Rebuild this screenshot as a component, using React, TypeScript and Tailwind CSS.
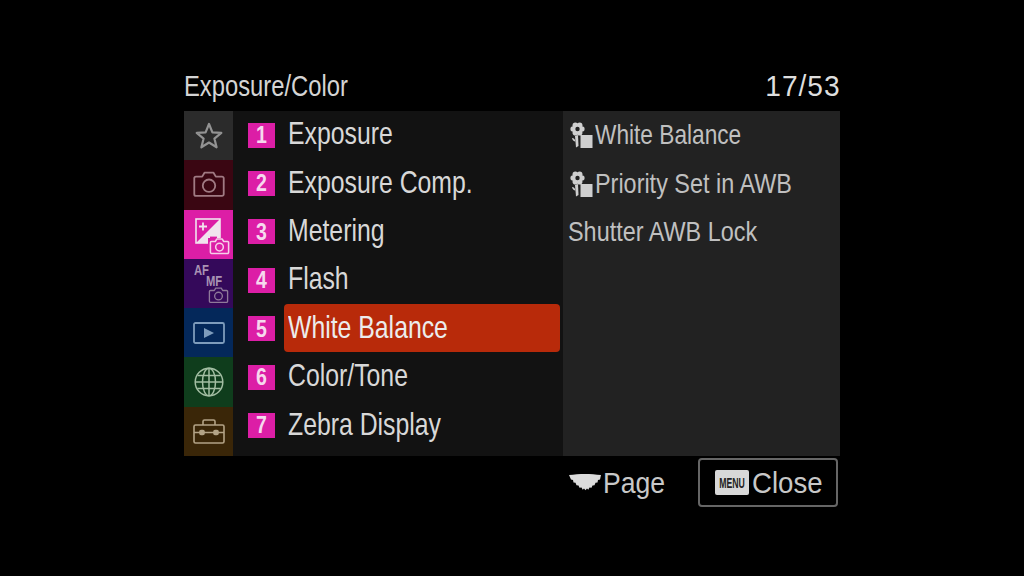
const F = "font-['Liberation_Sans',sans-serif]";

const Star = () => (
  <svg width="30" height="30" viewBox="0 0 30 30" fill="none" stroke="#939393" strokeWidth="2.2" strokeLinejoin="round">
    <path d="M15 3l3.4 8.3 8.9.6-6.900 5.700 2.200 8.700-7.600-4.800-7.600 4.800 2.200-8.700-6.900-5.700 8.900-.6z" />
  </svg>
);
const Camera = ({ c, w = 30, sw = 1.6 }: { c: string; w?: number; sw?: number }) => (
  <svg width={w} height={w * 0.8} viewBox="0 0 30 24" fill="none" stroke={c} strokeWidth={sw} strokeLinejoin="round">
    <path d="M2 6.500a1.500 1.500 0 0 1 1.500-1.500H9l2-3.500h8l2 3.500h5.500A1.500 1.500 0 0 1 28 6.500v14a1.500 1.500 0 0 1-1.500 1.500h-23A1.500 1.500 0 0 1 2 20.500z" />
    <circle cx="15" cy="13" r="5.500" />
  </svg>
);
const ExpIcon = () => (
  <div className="relative w-[36px] h-[40px]">
    <svg width="26" height="26" viewBox="0 0 26 26" className="absolute left-[4px] top-[4px]">
      <rect x="1" y="1" width="24" height="24" fill="none" stroke="#f1e4ee" strokeWidth="1.600" />
      <path d="M25 1V25H1z" fill="#f1e4ee" />
      <path d="M4 8.500h8M8 4.500v8" stroke="#f1e4ee" strokeWidth="1.800" />
      <path d="M15 19.500h7" stroke="#dc1ea6" strokeWidth="1.800" />
    </svg>
    <div className="absolute left-[17px] top-[24px] bg-[#dc1ea6] px-px">
      <Camera c="#f6cfe9" w={21} sw={2.200} />
    </div>
  </div>
);
const AfMf = () => (
  <div className="w-full h-full relative">
    <span className="absolute left-[10px] top-[3px] text-[15px] leading-4 font-bold text-[#a993b4] scale-x-[0.75] origin-left">AF</span>
    <span className="absolute left-[22px] top-[14px] text-[15px] leading-4 font-bold text-[#a993b4] scale-x-[0.75] origin-left">MF</span>
    <span className="absolute left-[24px] top-[28px]">
      <Camera c="#8f7a9a" w={21} sw={1.900} />
    </span>
  </div>
);
const Play = () => (
  <svg width="32" height="22" viewBox="0 0 32 22" fill="none">
    <rect x="1" y="1" width="30" height="20" rx="1.500" stroke="#7e9cbc" strokeWidth="1.800" />
    <path d="M11 6l10 5-10 5z" fill="#7e9cbc" />
  </svg>
);
const Globe = () => (
  <svg width="30" height="30" viewBox="0 0 30 30" fill="none" stroke="#a3bea3" strokeWidth="1.500">
    <circle cx="15" cy="15" r="13.800" />
    <ellipse cx="15" cy="15" rx="6.500" ry="13.800" />
    <path d="M15 1.500v27M1.500 15h27M3.500 8.500h23M3.500 21.500h23" />
  </svg>
);
const Toolbox = () => (
  <svg width="32" height="25" viewBox="0 0 32 25" fill="none" stroke="#b3a386" strokeWidth="1.600">
    <rect x="1" y="6" width="30" height="18" rx="1.500" />
    <path d="M10 6V2.500A1.500 1.500 0 0 1 11.500 1h9A1.500 1.500 0 0 1 22 2.500V6M1 13.500h30" />
    <rect x="7" y="11.500" width="4" height="4" rx="1" fill="#b3a386" />
    <rect x="21" y="11.500" width="4" height="4" rx="1" fill="#b3a386" />
  </svg>
);
const petals = [0, 60, 120, 180, 240, 300];
const WbIcon = () => (
  <svg width="23" height="26" viewBox="0 0 23 26" className="shrink-0">
    {petals.map((a) => (
      <circle
        key={a}
        cx={7.500 + 4.300 * Math.cos((a * Math.PI) / 180)}
        cy={7 + 4.300 * Math.sin((a * Math.PI) / 180)}
        r="2.800"
        fill="#cfcfcf"
      />
    ))}
    <circle cx="7.500" cy="7" r="3" fill="#cfcfcf" />
    <circle cx="7.500" cy="7" r="2.200" fill="#222222" />
    <path d="M5 14l3-1 .5 11-2.500 1.500z" fill="#cfcfcf" />
    <path d="M2 16c2 0 3 1.500 3.500 3.500C3.500 19.500 2.500 18 2 16z" fill="#cfcfcf" />
    <rect x="10.500" y="13" width="12" height="13" fill="#cfcfcf" />
  </svg>
);
const Dial = () => (
  <svg width="32" height="20" viewBox="0 0 32 20">
    <path d="M0 2c10-1.500 22-1.500 32 0l-1 4.500-2 .5-.5 2.500-2 .2-1 2.500-2 .2-1 2.300-2-.3-1.200 2.300-1.300-1.200-1.500 1.700-1.500-1.700-1.300 1.200-1.200-2.300-2 .3-1-2.300-2-.2-1-2.500-2-.2-.5-2.500-2-.5z" fill="#dcdcdc" />
  </svg>
);

const tabs = [
  { bg: "bg-[#2b2b2b]", el: <Star /> },
  { bg: "bg-[#3a0612]", el: <Camera c="#a07a83" w={34} /> },
  { bg: "bg-[#dc1ea6]", el: <ExpIcon /> },
  { bg: "bg-[#34095a]", el: <AfMf /> },
  { bg: "bg-[#04285a]", el: <Play /> },
  { bg: "bg-[#0f3d1c]", el: <Globe /> },
  { bg: "bg-[#3a2608]", el: <Toolbox /> },
];
const items = ["Exposure", "Exposure Comp.", "Metering", "Flash", "White Balance", "Color/Tone", "Zebra Display"];

export default function App() {
  return (
    <div className={`w-[1024px] h-[576px] bg-black flex flex-col pl-[184px] pr-[184px] pt-[67px] text-[#e4e4e4] ${F}`}>
      <div className="flex justify-between items-center h-[44px] pb-[4px] text-[29px] text-[#d4d4d4]">
        <span className="scale-x-[0.82] origin-left whitespace-nowrap">Exposure/Color</span>
        <span className="text-[#dedede] tracking-[1px] scale-x-[0.97] origin-right -mr-px">17/53</span>
      </div>
      <div className="flex h-[345px]">
        <div className="w-[49px] flex flex-col">
          {tabs.map((t, i) => (
            <div key={i} className={`h-[49.3px] flex items-center justify-center ${t.bg}`}>
              {t.el}
            </div>
          ))}
        </div>
        <div className="w-[330px] bg-[#121212] flex flex-col">
          {items.map((s, i) => (
            <div key={s} className="h-[48.4px] flex items-center">
              <span className="ml-[15px] w-[27px] h-[25px] bg-[#dc1ea6] text-[#f6d8ee] text-[23px] font-bold flex items-center justify-center">
                <span className="scale-x-[0.85]">{i + 1}</span>
              </span>
              <span
                className={`ml-[9px] mb-[2px] w-[276px] h-[48px] flex items-center pl-[4px] pb-[2px] rounded-[4px] text-[32px] ${
                  i === 4 ? "bg-[#b82a0a] text-[#ececec]" : "text-[#d8d8d8]"
                }`}
              >
                <span className="scale-x-[0.775] origin-left whitespace-nowrap">{s}</span>
              </span>
            </div>
          ))}
        </div>
        <div className="flex-1 bg-[#222222] flex flex-col text-[28px] text-[#c0c0c0] pl-[5px]">
          <div className="h-[49px] -mt-px flex items-center gap-[2px] pl-[2px]">
            <WbIcon />
            <span className="scale-x-[0.81] origin-left whitespace-nowrap">White Balance</span>
          </div>
          <div className="h-[49px] flex items-center gap-[2px] pl-[2px]">
            <WbIcon />
            <span className="scale-x-[0.836] origin-left whitespace-nowrap">Priority Set in AWB</span>
          </div>
          <div className="h-[48px] flex items-center">
            <span className="scale-x-[0.836] origin-left whitespace-nowrap">Shutter AWB Lock</span>
          </div>
        </div>
      </div>
      <div className="flex items-start justify-end pt-[2px] pr-[2px] text-[30px] text-[#c8c8c8]">
        <div className="flex items-center h-[49px] mr-[33px] gap-[2px]">
          <Dial />
          <span className="w-[62px] scale-x-[0.886] origin-left whitespace-nowrap">Page</span>
        </div>
        <div className="w-[140px] h-[49px] border-2 border-[#666666] rounded-[4px] flex items-center pl-[15px] gap-[3px]">
          <span className="w-[34px] h-[25px] bg-[#d8d8d8] text-[#222222] text-[15px] font-bold rounded-[2px] flex items-center justify-center leading-none">
            <span className="scale-x-[0.58] whitespace-nowrap">MENU</span>
          </span>
          <span className="scale-x-[0.92] origin-left whitespace-nowrap">Close</span>
        </div>
      </div>
    </div>
  );
}
